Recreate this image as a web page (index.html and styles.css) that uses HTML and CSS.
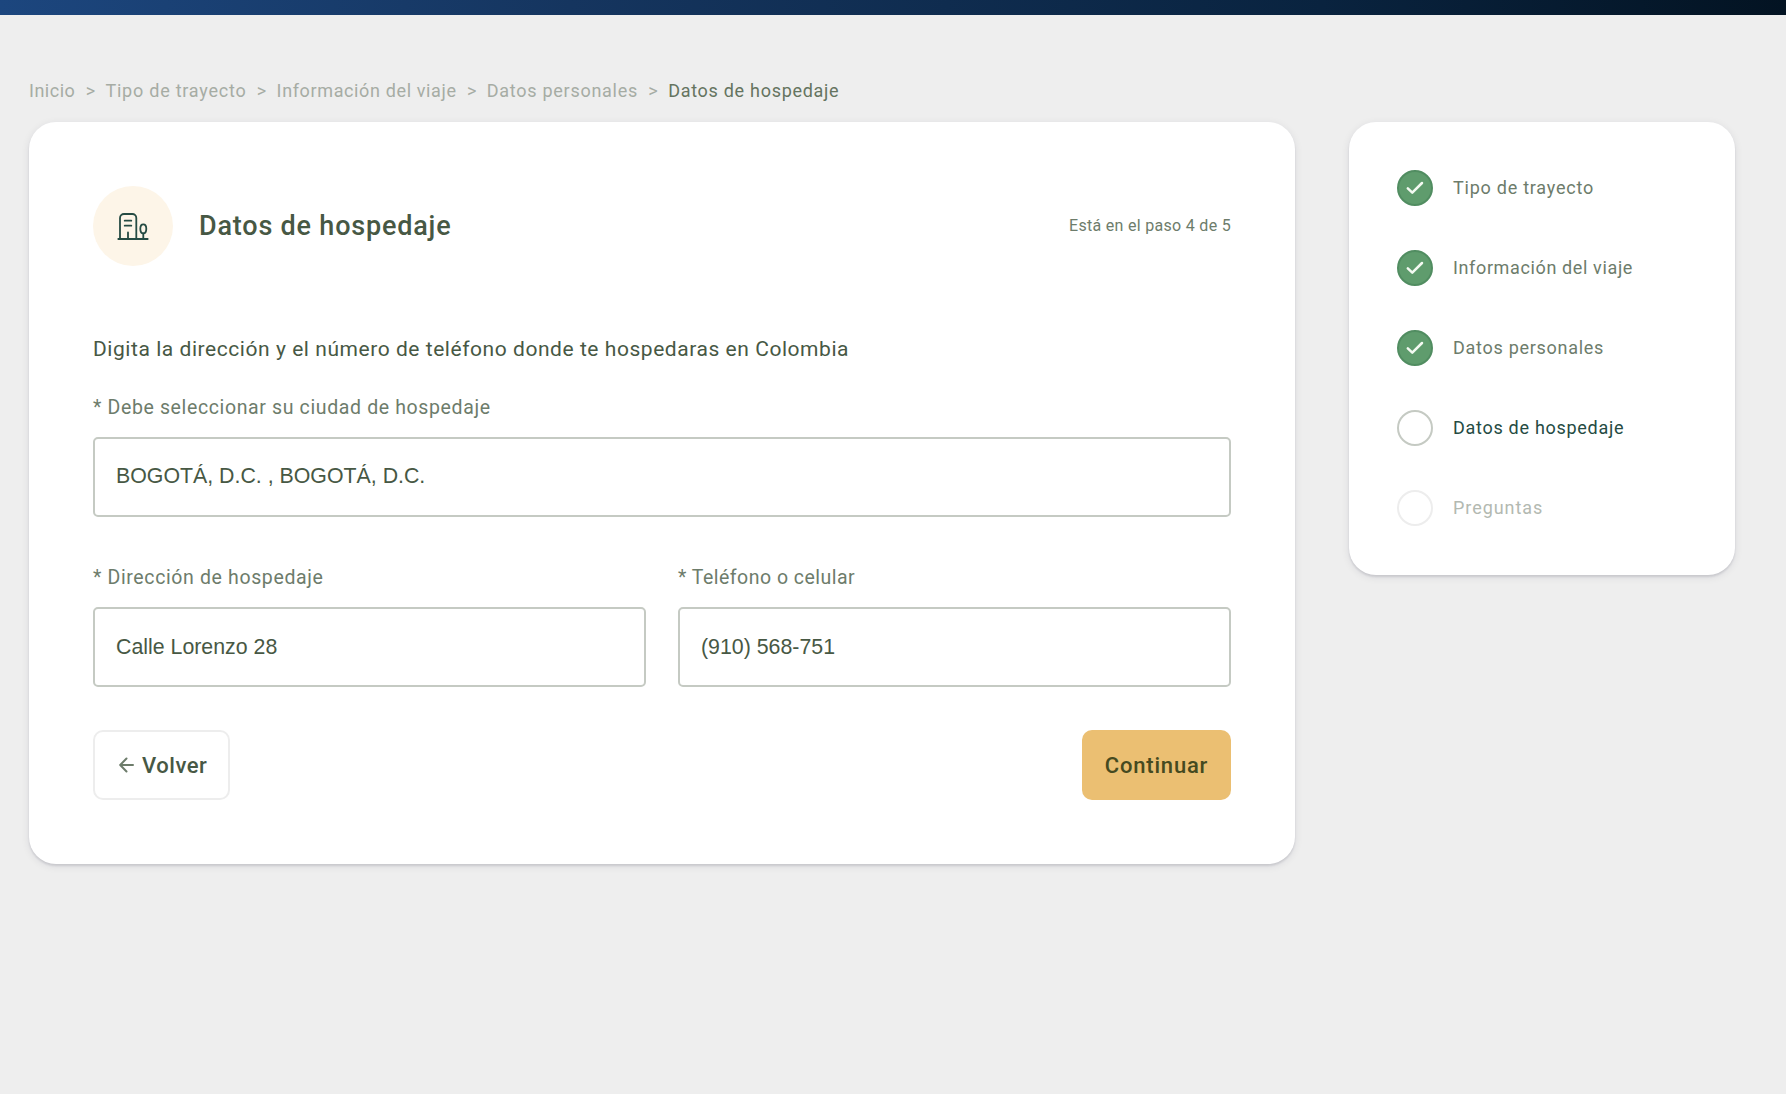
FILE: index.html
```html
<!DOCTYPE html>
<html lang="es">
<head>
<meta charset="utf-8">
<title>Datos de hospedaje</title>
<link rel="stylesheet" href="styles.css">
</head>
<body>
<header class="topbar"></header>
<main class="page">
  <nav class="breadcrumb">
    <a class="t-inicio">Inicio</a><i>&gt;</i>
    <a class="t-trayecto">Tipo de trayecto</a><i>&gt;</i>
    <a class="t-viaje">Información del viaje</a><i>&gt;</i>
    <a class="t-personales">Datos personales</a><i>&gt;</i>
    <a class="t-hospedaje current">Datos de hospedaje</a>
  </nav>
  <div class="columns">
    <section class="card form">
      <div class="head">
        <span class="badge">
          <svg width="34" height="30" viewBox="0 0 34 30" fill="none" stroke="#254b43" stroke-width="1.8" stroke-linecap="round" stroke-linejoin="round">
            <path d="M2.300 28h29.400M4 28V7a4 4 0 0 1 4-4H16.300a4 4 0 0 1 4 4V28M8.700 9.700h6.600M8.700 14.700h6.600M12 28v-6.500M27.300 28V22.500"/>
            <path d="M27.300 22.300c-2 0-3-1.800-3-4.600s1-4.400 3-4.400 3 1.600 3 4.400-1 4.600-3 4.600z"/>
          </svg>
        </span>
        <h1>Datos de hospedaje</h1>
        <span class="step">Está en el paso 4 de 5</span>
      </div>
      <p class="intro">Digita la dirección y el número de teléfono donde te hospedaras en Colombia</p>
      <label class="field">* Debe seleccionar su ciudad de hospedaje
        <input class="city" value="BOGOTÁ, D.C. , BOGOTÁ, D.C."></label>
      <div class="row">
        <label class="field">* Dirección de hospedaje
          <input value="Calle Lorenzo 28"></label>
        <label class="field phone">* Teléfono o celular
          <input value="(910) 568-751"></label>
      </div>
      <div class="actions">
        <button class="back"><svg width="15" height="16" viewBox="0 0 15 16" fill="none" stroke="#6d7c6b" stroke-width="2" stroke-linecap="round" stroke-linejoin="round"><path d="M14 8H1.500M7.500 1.500L1.200 8l6.300 6.500"/></svg><span>Volver</span></button>
        <button class="next">Continuar</button>
      </div>
    </section>
    <aside class="card steps">
      <div class="item"><b class="done"><svg width="18" height="14" viewBox="0 0 18 14"><path d="M1.800 7.300L6.300 11.700L16 2"/></svg></b><span class="t-trayecto">Tipo de trayecto</span></div>
      <div class="item"><b class="done"><svg width="18" height="14" viewBox="0 0 18 14"><path d="M1.800 7.300L6.300 11.700L16 2"/></svg></b><span class="t-viaje">Información del viaje</span></div>
      <div class="item"><b class="done"><svg width="18" height="14" viewBox="0 0 18 14"><path d="M1.800 7.300L6.300 11.700L16 2"/></svg></b><span class="t-personales">Datos personales</span></div>
      <div class="item active"><b></b><span class="t-hospedaje">Datos de hospedaje</span></div>
      <div class="item pending"><b></b><span class="t-preguntas">Preguntas</span></div>
    </aside>
  </div>
</main>
</body>
</html>
```
FILE: styles.css
```css
* { box-sizing: border-box; }
body { margin: 0; min-height: 1094px; background: #eee; font-family: Roboto, sans-serif; color: #475844; }
.topbar { height: 15px; background: linear-gradient(90deg, #1c467e, #15355f 32%, #09233f 74%, #031322); }
.page { padding: 60px 51px 0 29px; }
.breadcrumb { display: flex; gap: 10.400px; height: 47px; line-height: 31px; font-size: 18px; color: #a6aca4; }
.breadcrumb i { font-style: normal; }
.breadcrumb .current { color: #65745f; }
.t-inicio { letter-spacing: .5px; }
.t-trayecto { letter-spacing: .76px; }
.t-viaje { letter-spacing: .63px; }
.t-personales { letter-spacing: .72px; }
.t-hospedaje { letter-spacing: .71px; }
.t-preguntas { letter-spacing: .95px; }
.columns { display: flex; align-items: flex-start; justify-content: space-between; }
.card { background: #fff; border-radius: 27px; box-shadow: 0 2px 2px rgba(20, 20, 50, .11), 0 2px 8px rgba(20, 20, 50, .09); }
.form { width: 1266px; height: 742px; padding: 64px; }
.head { display: flex; align-items: center; height: 80px; }
.badge { width: 80px; height: 80px; border-radius: 50%; background: #fdf5e8; display: flex; align-items: center; justify-content: center; }
h1 { margin: 0 auto 0 26px; font-size: 27px; font-weight: 500; letter-spacing: .8px; }
.step { font-size: 16px; letter-spacing: .3px; color: #6d7c6b; padding-bottom: 2px; }
.intro { margin: 66px 0 0; font-size: 21px; line-height: 34px; letter-spacing: .55px; }
.field { display: block; font-size: 19.500px; line-height: 30px; letter-spacing: .63px; color: #6d7c6b; margin-top: 27px; }
.phone { letter-spacing: .48px; }
.field input { display: block; width: 100%; height: 80px; margin-top: 14px; border: 2px solid #c5cac3; border-radius: 5px; padding: 0 21px; font: 21.330px "Liberation Sans", sans-serif; letter-spacing: 0; color: #475844; background: #fff; }
.field .city { padding-bottom: 2px; }
.row { display: grid; grid-template-columns: 1fr 1fr; gap: 32px; margin-top: 46px; }
.row .field { margin-top: 0; }
.actions { display: flex; justify-content: space-between; margin-top: 43px; }
button { height: 70px; border-radius: 10px; font: 500 22px Roboto, sans-serif; color: #475844; display: flex; align-items: center; }
.back { width: 137px; border: 2px solid #ededed; background: #fff; padding: 0 0 0 24px; gap: 8px; letter-spacing: .55px; }
.back span { padding-top: 1px; }
.next { width: 149px; border: 0; background: #ebbf72; color: #454a20; justify-content: center; letter-spacing: .8px; }
.steps { width: 386px; height: 453px; padding: 48px; display: flex; flex-direction: column; gap: 44px; }
.item { display: flex; align-items: center; gap: 20px; height: 36px; font-size: 18px; color: #6d7c6b; }
.item span { padding-bottom: 2px; }
.item b { width: 36px; height: 36px; border-radius: 50%; border: 2px solid #c5cac3; display: flex; align-items: center; justify-content: center; padding-bottom: 1px; }
.item .done { background: #5f9c6d; border-color: #518d61; }
.item path { fill: none; stroke: #f4faf2; stroke-width: 2.500; stroke-linecap: round; stroke-linejoin: round; }
.active { color: #254b43; }
.pending { color: #b3b9b1; }
.pending b { border-color: #ededed; }
```
